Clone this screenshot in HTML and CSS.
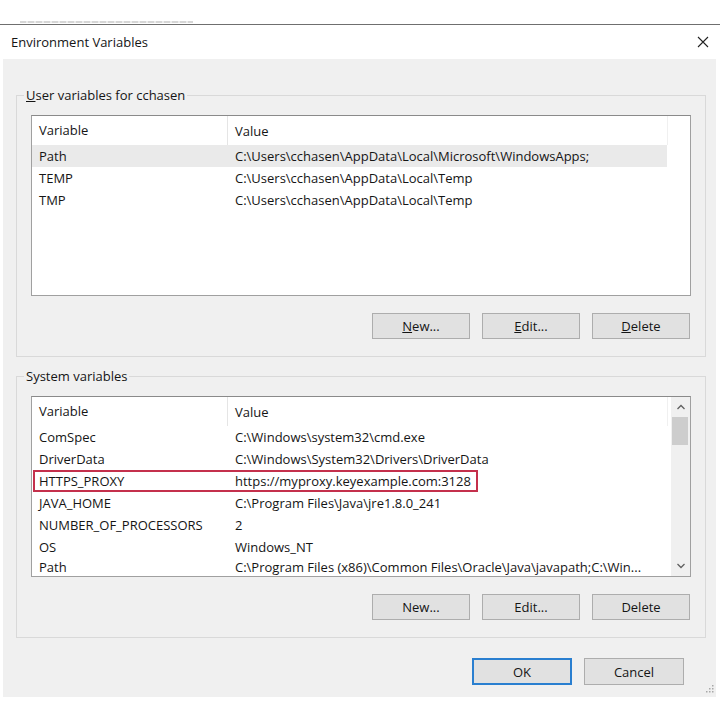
FILE: index.html
```html
<!DOCTYPE html>
<html lang="en">
<head>
    <meta charset="UTF-8">
    <title>Environment Variables</title>
    <link rel="stylesheet" href="styles.css">
</head>
<body>
    <div class="top-strip"><div class="ghost"></div></div>
    <div class="top-line"></div>

    <div class="window">
        <div class="titlebar">
            <span class="title">Environment Variables</span>
            <svg class="close" width="12" height="12" viewBox="0 0 12 12">
                <path d="M1 1 L11 11 M11 1 L1 11" stroke="#222" stroke-width="1.1" fill="none"/>
            </svg>
        </div>

        <div class="body">
            <div class="group">
                <div class="group-label"><u>U</u>ser variables for cchasen</div>
                <div class="list user-list">
                    <div class="list-main">
                        <div class="list-head">
                            <div class="col1">Variable</div>
                            <div class="col2">Value</div>
                        </div>
                        <div class="row selected"><div class="col1">Path</div><div class="col2">C:\Users\cchasen\AppData\Local\Microsoft\WindowsApps;</div></div>
                        <div class="row"><div class="col1">TEMP</div><div class="col2">C:\Users\cchasen\AppData\Local\Temp</div></div>
                        <div class="row"><div class="col1">TMP</div><div class="col2">C:\Users\cchasen\AppData\Local\Temp</div></div>
                    </div>
                </div>
                <div class="buttons">
                    <button class="btn"><u>N</u>ew...</button>
                    <button class="btn"><u>E</u>dit...</button>
                    <button class="btn"><u>D</u>elete</button>
                </div>
            </div>

            <div class="group second">
                <div class="group-label">System variables</div>
                <div class="list sys-list">
                    <div class="list-main">
                        <div class="list-head">
                            <div class="col1">Variable</div>
                            <div class="col2">Value</div>
                        </div>
                        <div class="row"><div class="col1">ComSpec</div><div class="col2">C:\Windows\system32\cmd.exe</div></div>
                        <div class="row"><div class="col1">DriverData</div><div class="col2">C:\Windows\System32\Drivers\DriverData</div></div>
                        <div class="row flagged"><div class="col1">HTTPS_PROXY</div><div class="col2">https://myproxy.keyexample.com:3128</div></div>
                        <div class="row"><div class="col1">JAVA_HOME</div><div class="col2">C:\Program Files\Java\jre1.8.0_241</div></div>
                        <div class="row"><div class="col1">NUMBER_OF_PROCESSORS</div><div class="col2">2</div></div>
                        <div class="row"><div class="col1">OS</div><div class="col2">Windows_NT</div></div>
                        <div class="row"><div class="col1">Path</div><div class="col2">C:\Program Files (x86)\Common Files\Oracle\Java\javapath;C:\Win...</div></div>
                    </div>
                    <div class="scrollbar">
                        <svg class="arrow" width="20" height="18" viewBox="0 0 20 18">
                            <path d="M6.5 12 L10 8.5 L13.5 12" stroke="#606060" stroke-width="1.3" fill="none"/>
                        </svg>
                        <div class="thumb"></div>
                        <div class="track"></div>
                        <svg class="arrow" width="20" height="18" viewBox="0 0 20 18">
                            <path d="M6.5 6 L10 9.5 L13.5 6" stroke="#606060" stroke-width="1.3" fill="none"/>
                        </svg>
                    </div>
                </div>
                <div class="buttons">
                    <button class="btn">New...</button>
                    <button class="btn">Edit...</button>
                    <button class="btn">Delete</button>
                </div>
            </div>

            <div class="dialog-buttons">
                <button class="btn default">OK</button>
                <button class="btn">Cancel</button>
            </div>

            <svg class="grip" width="12" height="12" viewBox="0 0 12 12">
                <rect x="9" y="1" width="1.5" height="1.5" fill="#a8a8a8"/>
                <rect x="6" y="4" width="1.5" height="1.5" fill="#a8a8a8"/>
                <rect x="9" y="4" width="1.5" height="1.5" fill="#a8a8a8"/>
                <rect x="3" y="7" width="1.5" height="1.5" fill="#a8a8a8"/>
                <rect x="6" y="7" width="1.5" height="1.5" fill="#a8a8a8"/>
                <rect x="9" y="7" width="1.5" height="1.5" fill="#a8a8a8"/>
            </svg>
        </div>
    </div>
</body>
</html>
```

FILE: styles.css
```css
body {
    margin: 0;
    width: 720px;
    height: 705px;
    overflow: hidden;
    background: #fff;
    font-family: "Open Sans", "Noto Sans", sans-serif;
    font-size: 13px;
    color: #151515;
}
.top-strip {
    height: 24px;
    display: flex;
    align-items: flex-end;
}
.ghost {
    width: 173px;
    height: 2px;
    margin: 0 0 1px 20px;
    background: repeating-linear-gradient(90deg, #d6d6d6 0 6px, #ececec 6px 8px);
}
.top-line {
    height: 1px;
    background: #6f6f6f;
}
.window {
    margin-left: 3px;
    width: 713px;
}
.titlebar {
    height: 34px;
    display: flex;
    align-items: center;
    justify-content: space-between;
    padding: 0 8px;
    background: #fff;
}
.title {
    font-size: 13px;
}
.close {
    margin-right: -1px;
}
.body {
    position: relative;
    height: 638px;
    box-sizing: border-box;
    background: #f0f0f0;
    padding: 36px 10px 0 13px;
}
.group {
    border: 1px solid #d9d9d9;
    padding: 0 14px 17px;
}
.group.second {
    margin-top: 19px;
}
.group-label {
    width: fit-content;
    height: 18px;
    line-height: 18px;
    margin: -10px 0 0 -7px;
    padding: 0 2px;
    background: #f0f0f0;
}
.list {
    margin-top: 11px;
    height: 181px;
    border: 1px solid #a0a0a0;
    border-top-color: #8a8a8a;
    background: #fff;
    display: flex;
    box-sizing: border-box;
}
.list-main {
    flex: 1;
    overflow: hidden;
}
.list-head,
.row {
    width: 635px;
    display: flex;
    white-space: nowrap;
}
.list-head {
    height: 29px;
    align-items: center;
    border-right: 1px solid #f0f0f0;
}
.list-head .col1 {
    border-right: 1px solid #e5e5e5;
    height: 29px;
    line-height: 29px;
}
.row {
    position: relative;
    height: 22px;
    line-height: 22px;
}
.sys-list .row:last-child {
    height: 18px;
    line-height: 18px;
}
.row.selected {
    background: #eaeaea;
}
.row.flagged::after {
    content: "";
    position: absolute;
    left: 1px;
    top: 0;
    width: 445px;
    height: 22px;
    box-sizing: border-box;
    border: 2px solid #c4304c;
}
.col1 {
    width: 196px;
    padding-left: 7px;
    box-sizing: border-box;
    flex-shrink: 0;
}
.col2 {
    padding-left: 7px;
}
.scrollbar {
    width: 19px;
    background: #f0f0f0;
    display: flex;
    flex-direction: column;
}
.arrow {
    display: block;
    flex-shrink: 0;
}
.thumb {
    height: 28px;
    margin: 2px 2px 0 1px;
    background: #cdcdcd;
}
.track {
    flex: 1;
}
.buttons {
    display: flex;
    justify-content: flex-end;
    gap: 12px;
    margin: 17px 1px 0 0;
}
.btn {
    width: 98px;
    height: 26px;
    padding: 0;
    font-family: inherit;
    font-size: 13px;
    color: #151515;
    background: #e1e1e1;
    border: 1px solid #adadad;
}
.dialog-buttons {
    display: flex;
    justify-content: flex-end;
    gap: 12px;
    margin: 20px 22px 0 0;
}
.dialog-buttons .btn {
    width: 100px;
    height: 27px;
}
.btn.default {
    border: 2px solid #2a7fd0;
}
.grip {
    position: absolute;
    right: 1px;
    bottom: 1px;
}
```
